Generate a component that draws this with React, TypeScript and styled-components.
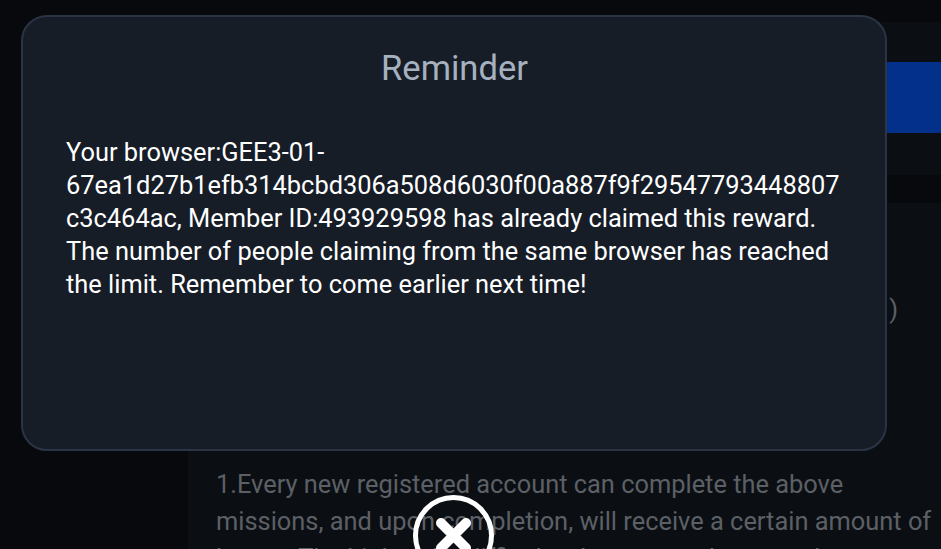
import React from "react";
import styled, { createGlobalStyle } from "styled-components";

const Global = createGlobalStyle`
  html, body { margin: 0; padding: 0; width: 941px; height: 549px; overflow: hidden; background: #07090d; }
  #root { width: 941px; height: 549px; overflow: hidden; }
`;

const Page = styled.div`
  width: 941px;
  height: 549px;
  overflow: hidden;
  position: relative;
  background: #07090d;
  font-family: Roboto, "Liberation Sans", sans-serif;
  display: flex;
`;

const Rail = styled.div`
  width: 188px;
  flex: none;
`;

const Content = styled.main`
  flex: 1;
  min-width: 0;
  margin-top: 22px;
  background: #0b0f13;
  display: flex;
  flex-direction: column;
`;

const TopGap = styled.div`
  height: 40px;
  flex: none;
`;

const Banner = styled.div`
  height: 71px;
  flex: none;
  background: #03308a;
`;

const BannerGap = styled.div`
  height: 42px;
  flex: none;
`;

const Divider = styled.div`
  height: 28px;
  flex: none;
  background: #07090d;
`;

const Rules = styled.div`
  padding: 263px 0 0 28px;
  position: relative;
  font-size: 25.4px;
  line-height: 37px;
  color: #5c6066;
`;

const Paren = styled.span`
  position: absolute;
  right: 43px;
  top: 88px;
`;

const Overlay = styled.div`
  position: absolute;
  inset: 0;
`;

const Modal = styled.section`
  position: absolute;
  left: 21px;
  top: 15px;
  width: 866px;
  height: 436px;
  box-sizing: border-box;
  background: #161d27;
  border: 2px solid #2b3444;
  border-radius: 26px;
  padding: 0 44px 0 43px;
`;

const Title = styled.h2`
  margin: 0;
  padding: 29px 0 0 2px;
  height: 70px;
  box-sizing: content-box;
  text-align: center;
  font-size: 34.6px;
  line-height: 44px;
  font-weight: 400;
  color: #a6b1bf;
`;

const Message = styled.p`
  margin: 20px 0 0;
  font-size: 25.4px;
  line-height: 33px;
  color: #fff;
`;

const Close = styled.button`
  position: absolute;
  left: 413px;
  top: 495px;
  width: 81px;
  height: 81px;
  padding: 0;
  border: none;
  background: none;
`;

export default function App() {
  return (
    <>
      <Global />
      <Page>
        <Rail />
        <Content>
          <TopGap />
          <Banner />
          <BannerGap />
          <Divider />
          <Rules>
            <Paren>)</Paren>
            1.Every new registered account can complete the above missions, and upon completion, will receive a certain amount of bonus. The higher the difficulty, the greater the reward.
          </Rules>
        </Content>
        <Overlay>
          <Modal>
            <Title>Reminder</Title>
            <Message>
              Your browser:GEE3-01-
              <br />
              67ea1d27b1efb314bcbd306a508d6030f00a887f9f29547793448807
              <br />
              c3c464ac, Member ID:493929598 has already claimed this reward.
              <br />
              The number of people claiming from the same browser has reached
              <br />
              the limit. Remember to come earlier next time!
            </Message>
          </Modal>
          <Close aria-label="Close">
            <svg width="81" height="81" viewBox="0 0 81 81" fill="none">
              <circle cx="40.5" cy="40.5" r="38" stroke="#fff" strokeWidth="5" />
              <path d="M28 28 L53 53 M53 28 L28 53" stroke="#fff" strokeWidth="10" strokeLinecap="round" />
            </svg>
          </Close>
        </Overlay>
      </Page>
    </>
  );
}
